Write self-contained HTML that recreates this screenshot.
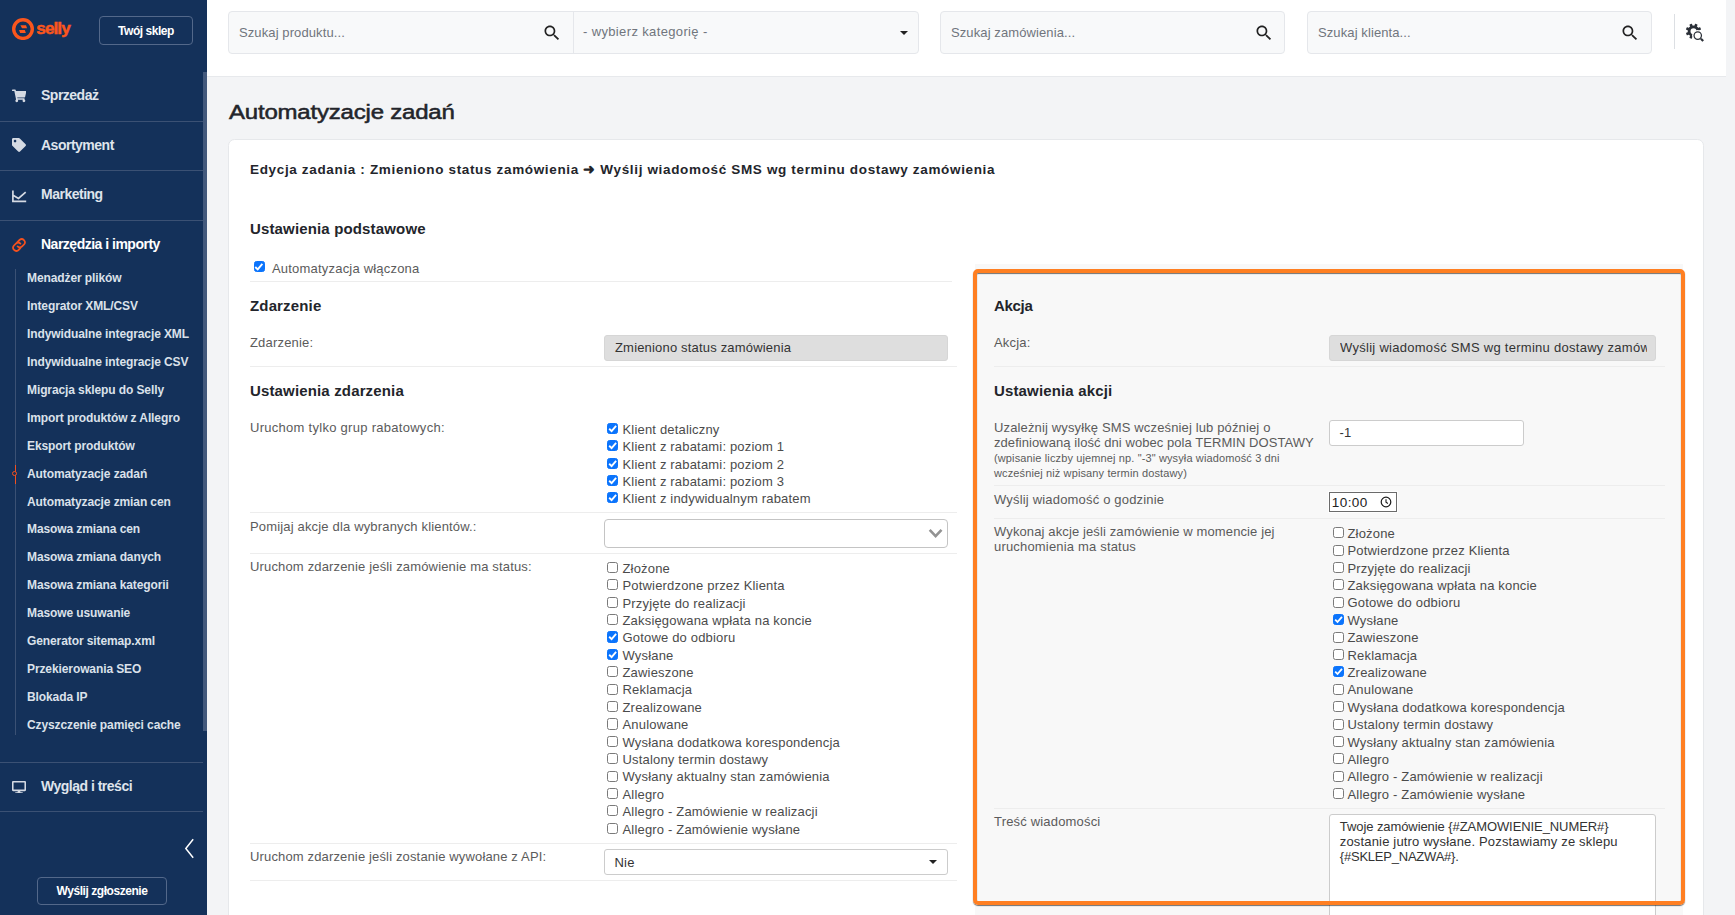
<!DOCTYPE html>
<html lang="pl">
<head>
<meta charset="utf-8">
<title>Automatyzacje zadań</title>
<style>
*{box-sizing:border-box;}
html,body{margin:0;padding:0;}
body{width:1735px;height:915px;overflow:hidden;position:relative;background:#f3f4f6;font-family:"Liberation Sans",sans-serif;font-size:13px;color:#555;letter-spacing:.18px;}
.abs{position:absolute;}
/* ---------- sidebar ---------- */
#side{position:absolute;left:0;top:0;width:207px;height:915px;background:#14315a;color:#fff;}
#side .sb{position:absolute;left:203px;top:72px;width:4px;height:659px;background:#43597c;}
#logo{position:absolute;left:11.7px;top:17.8px;}
#logotxt{position:absolute;left:36.3px;top:16.6px;font-size:17.2px;font-weight:700;color:#fb561d;letter-spacing:-.95px;line-height:22px;-webkit-text-stroke:.5px #fb561d;}
.btn-o{position:absolute;border:1px solid #53688a;border-radius:4px;color:#fff;font-weight:700;font-size:12px;letter-spacing:-.45px;text-align:center;}
.mi{position:absolute;left:0;width:203px;height:50px;border-bottom:1px solid #3b5174;}
.mi span{position:absolute;left:41px;top:15px;font-size:14px;line-height:17px;font-weight:700;letter-spacing:-.5px;color:#dfe4ec;white-space:nowrap;}
.mi svg{position:absolute;}
.sub{position:absolute;left:27px;font-size:12px;line-height:14px;font-weight:700;letter-spacing:-.1px;color:#dbe1ea;white-space:nowrap;}
#vline{position:absolute;left:15px;top:269px;width:1px;height:466px;background:#3b5174;}
/* ---------- topbar ---------- */
#top{position:absolute;left:207px;top:0;width:1519px;height:77px;background:#fff;border-bottom:1px solid #e7e9ec;}
.sbox{position:absolute;top:11px;height:43px;background:#f8f9fa;border:1px solid #e5e7eb;border-radius:4px;}
.ph{position:absolute;top:13px;font-size:13px;line-height:16px;color:#70757d;white-space:nowrap;letter-spacing:.1px;}
.sic{position:absolute;top:13px;}
/* ---------- content ---------- */
h1{position:absolute;left:229px;top:96.5px;margin:0;font-size:24px;line-height:28px;font-weight:400;color:#23252b;letter-spacing:-.2px;white-space:nowrap;-webkit-text-stroke:.6px #23252b;transform:scaleY(.88);transform-origin:0 22px;}
#card{position:absolute;left:227.5px;top:138.5px;width:1476px;height:800px;background:#fff;border-radius:6.5px;border:1px solid #e6e8eb;}
.h2{position:absolute;font-size:15px;line-height:20px;font-weight:700;color:#23252b;letter-spacing:.15px;white-space:nowrap;}
.lbl{position:absolute;font-size:13px;line-height:15px;white-space:nowrap;color:#5b5b5b;}
.hr{position:absolute;height:1px;background:#ededed;}
.dis{position:absolute;height:26px;background:#dedede;border:1px solid #d6d6d6;border-radius:3px;color:#333;font-size:13px;line-height:24px;padding-left:10px;white-space:nowrap;overflow:hidden;}
.cb{position:absolute;width:11.5px;height:11.5px;border:1.1px solid #7a7a7a;border-radius:2.5px;background:#fff;}
.cb.on{background:#0b74fc;border-color:#0b74fc;}
.cb svg{position:absolute;left:-1.1px;top:-1.1px;width:calc(100% + 2.2px);height:calc(100% + 2.2px);}
.cl{position:absolute;font-size:13px;line-height:15px;color:#4b4b4b;white-space:nowrap;}
</style>
</head>
<body>
<!-- SIDEBAR -->
<div id="side">
  <svg id="logo" width="22" height="22" viewBox="0 0 22 22"><circle cx="11" cy="11.1" r="9.3" fill="none" stroke="#fb561d" stroke-width="3.4"/><path d="M8.400 7.300h5.650l1 2.900h-5.050zM7 11.950h5.840l1 3h-5.640z" fill="#fb561d"/></svg>
  <div id="logotxt">selly</div>
  <div class="btn-o" style="left:99px;top:16px;width:94px;height:29px;line-height:28px;">Twój sklep</div>
  <div class="sb"></div>
  <div class="mi" style="top:72px"><svg style="left:12px;top:17px" width="14.300" height="13.600" viewBox="0 0 576 512"><path fill="#d5dae3" d="M528.12 301.319l47.273-208C578.806 78.301 567.391 64 551.99 64H159.208l-9.166-44.81C147.758 8.021 137.93 0 126.529 0H24C10.745 0 0 10.745 0 24v16c0 13.255 10.745 24 24 24h69.883l70.248 343.435C147.325 417.1 136 435.222 136 456c0 30.928 25.072 56 56 56s56-25.072 56-56c0-15.674-6.447-29.835-16.824-40h209.647C430.447 426.165 424 440.326 424 456c0 30.928 25.072 56 56 56s56-25.072 56-56c0-22.172-12.888-41.332-31.579-50.405l5.517-24.276c3.413-15.018-8.002-29.319-23.403-29.319H218.117l-6.545-32h293.145c11.206 0 20.92-7.754 23.403-18.681z"/></svg><span>Sprzedaż</span></div>
  <div class="mi" style="top:121px;height:50px"><svg style="left:12px;top:17px" width="14" height="14" viewBox="0 0 512 512"><path fill="#d5dae3" d="M0 252.118V48C0 21.49 21.49 0 48 0h204.118a48 48 0 0 1 33.941 14.059l211.882 211.882c18.745 18.745 18.745 49.137 0 67.882L293.823 497.941c-18.745 18.745-49.137 18.745-67.882 0L14.059 286.059A48 48 0 0 1 0 252.118zM112 64c-26.51 0-48 21.49-48 48s21.49 48 48 48 48-21.49 48-48-21.49-48-48-48z"/></svg><span style="top:16px">Asortyment</span></div>
  <div class="mi" style="top:171px;height:50px"><svg style="left:12px;top:17px" width="14.500" height="14.500" viewBox="0 0 14.500 14.500"><path fill="none" stroke="#d5dae3" stroke-width="1.700" d="M.9 2.600v10.700h13.300M1.500 7.400l5 3 7.200-6.300"/></svg><span style="top:15px">Marketing</span></div>
  <div class="mi" style="top:221px;height:48px;border-bottom:0"><svg style="left:10.900px;top:16px" width="16" height="16" viewBox="0 0 15 15"><g fill="none" stroke="#f4511e" stroke-width="1.650" stroke-linecap="round"><path d="M6.200 4.600l2-2a3 3 0 0 1 4.200 4.200l-2 2a3 3 0 0 1-4.200 0"/><path d="M8.800 10.400l-2 2a3 3 0 0 1-4.200-4.200l2-2a3 3 0 0 1 4.200 0"/></g></svg><span style="top:15px;color:#fff">Narzędzia i importy</span></div>
  <div id="vline"></div>
  <div class="sub" style="top:271px">Menadżer plików</div>
  <div class="sub" style="top:299px">Integrator XML/CSV</div>
  <div class="sub" style="top:327px">Indywidualne integracje XML</div>
  <div class="sub" style="top:355px">Indywidualne integracje CSV</div>
  <div class="sub" style="top:383px">Migracja sklepu do Selly</div>
  <div class="sub" style="top:411px">Import produktów z Allegro</div>
  <div class="sub" style="top:439px">Eksport produktów</div>
  <div class="sub" style="top:467px">Automatyzacje zadań</div>
  <div class="sub" style="top:495px">Automatyzacje zmian cen</div>
  <div class="sub" style="top:522px">Masowa zmiana cen</div>
  <div class="sub" style="top:550px">Masowa zmiana danych</div>
  <div class="sub" style="top:578px">Masowa zmiana kategorii</div>
  <div class="sub" style="top:606px">Masowe usuwanie</div>
  <div class="sub" style="top:634px">Generator sitemap.xml</div>
  <div class="sub" style="top:662px">Przekierowania SEO</div>
  <div class="sub" style="top:690px">Blokada IP</div>
  <div class="sub" style="top:718px">Czyszczenie pamięci cache</div>
  <div class="abs" style="left:15px;top:465px;width:1px;height:19px;background:#f4511e"></div><div class="abs" style="left:11.800px;top:470.700px;width:5.400px;height:5.400px;border:1.200px solid #f4511e;border-radius:50%;background:#14315a"></div>
  <div class="mi" style="top:762px;height:50px;border-top:1px solid #3b5174"><svg style="left:12px;top:17.500px" width="14" height="12.500" viewBox="0 0 576 512"><path fill="#d5dae3" d="M528 0H48C21.5 0 0 21.5 0 48v320c0 26.5 21.5 48 48 48h192l-16 48h-72c-13.3 0-24 10.7-24 24s10.7 24 24 24h272c13.3 0 24-10.7 24-24s-10.7-24-24-24h-72l-16-48h192c26.5 0 48-21.5 48-48V48c0-26.5-21.5-48-48-48zm-16 352H64V64h448v288z"/></svg><span style="top:15.300px">Wygląd i treści</span></div>
  <svg class="abs" style="left:184px;top:838px" width="11" height="21" viewBox="0 0 11 21"><path d="M9.2 1.2L1.8 10.5l7.4 9.3" fill="none" stroke="#fff" stroke-width="1.5"/></svg>
  <div class="btn-o" style="left:37px;top:876.500px;width:130px;height:28.500px;line-height:27.500px;">Wyślij zgłoszenie</div>
</div>
<!-- TOPBAR -->
<div id="top">
  <div class="sbox" style="left:21px;width:691px;">
    <div class="ph" style="left:10px;">Szukaj produktu...</div>
    <svg class="abs" style="left:313px;top:11px" width="20" height="20" viewBox="0 0 24 24"><path fill="#222" d="M15.5 14h-.79l-.28-.27C15.41 12.59 16 11.11 16 9.5 16 5.91 13.09 3 9.500 3S3 5.910 3 9.500 5.910 16 9.500 16c1.610 0 3.090-.590 4.230-1.570l.270.280v.790l5 4.990L20.490 19l-4.990-5zm-6 0C7.010 14 5 11.990 5 9.500S7.010 5 9.500 5 14 7.010 14 9.500 11.990 14 9.500 14z"/></svg>
    <div class="abs" style="left:344px;top:0;width:1px;height:41px;background:#e5e7eb"></div>
    <div class="ph" style="left:354px;top:12px;letter-spacing:.36px">- wybierz kategorię -</div>
    <div class="abs" style="left:671px;top:18.500px;width:0;height:0;border:4.800px solid transparent;border-top:4.800px solid #222;border-bottom:0"></div>
  </div>
  <div class="sbox" style="left:733px;width:345px;">
    <div class="ph" style="left:10px;">Szukaj zamówienia...</div>
    <svg class="abs" style="left:313px;top:11px" width="20" height="20" viewBox="0 0 24 24"><path fill="#222" d="M15.5 14h-.79l-.28-.27C15.41 12.59 16 11.11 16 9.5 16 5.91 13.09 3 9.500 3S3 5.910 3 9.500 5.910 16 9.500 16c1.610 0 3.090-.590 4.230-1.570l.270.280v.790l5 4.990L20.490 19l-4.990-5zm-6 0C7.010 14 5 11.990 5 9.500S7.010 5 9.500 5 14 7.010 14 9.500 11.990 14 9.500 14z"/></svg>
  </div>
  <div class="sbox" style="left:1100px;width:345px;">
    <div class="ph" style="left:10px;">Szukaj klienta...</div>
    <svg class="abs" style="left:312px;top:11px" width="20" height="20" viewBox="0 0 24 24"><path fill="#222" d="M15.5 14h-.79l-.28-.27C15.41 12.59 16 11.11 16 9.5 16 5.91 13.09 3 9.500 3S3 5.910 3 9.500 5.910 16 9.500 16c1.610 0 3.090-.590 4.230-1.570l.270.280v.790l5 4.990L20.490 19l-4.990-5zm-6 0C7.010 14 5 11.990 5 9.500S7.010 5 9.500 5 14 7.010 14 9.500 11.990 14 9.500 14z"/></svg>
  </div>
  <div class="abs" style="left:1467px;top:14px;width:1px;height:35px;background:#dcdfe3"></div>
  <svg class="abs" style="left:1477px;top:22px" width="22" height="22" viewBox="0 0 22 22">
    <g fill="#2b3038"><rect x="8.15" y="1.5" width="2.7" height="3.6" rx=".5" transform="rotate(22.5 9.5 9.2)"/><rect x="8.15" y="1.5" width="2.7" height="3.6" rx=".5" transform="rotate(67.5 9.5 9.2)"/><rect x="8.15" y="1.5" width="2.7" height="3.6" rx=".5" transform="rotate(112.5 9.5 9.2)"/><rect x="8.15" y="1.5" width="2.7" height="3.6" rx=".5" transform="rotate(157.5 9.5 9.2)"/><rect x="8.15" y="1.5" width="2.7" height="3.6" rx=".5" transform="rotate(202.5 9.5 9.2)"/><rect x="8.15" y="1.5" width="2.7" height="3.6" rx=".5" transform="rotate(247.5 9.5 9.2)"/><rect x="8.15" y="1.5" width="2.7" height="3.6" rx=".5" transform="rotate(292.5 9.5 9.2)"/><rect x="8.15" y="1.5" width="2.7" height="3.6" rx=".5" transform="rotate(337.5 9.5 9.2)"/></g><circle cx="9.500" cy="9.200" r="4.400" fill="none" stroke="#2b3038" stroke-width="2.800"/>
    <circle cx="13.750" cy="13.600" r="5.700" fill="#fff"/>
    <circle cx="13.750" cy="13.600" r="3.700" fill="none" stroke="#2b3038" stroke-width="1.250"/>
    <path d="M16.900 16.700l2.300 2.300" stroke="#2b3038" stroke-width="2.200" stroke-linecap="butt"/>
  </svg>
</div>
<!-- CONTENT -->
<h1>Automatyzacje zadań</h1>
<div id="card"></div>
<div class="abs" style="left:975px;top:264px;width:708px;height:660px;background:#f8f8f8"></div>
<div class="h2" style="left:250px;top:160.0px;font-size:13.5px;letter-spacing:.655px">Edycja zadania : Zmieniono status zamówienia ➜ Wyślij wiadomość SMS wg terminu dostawy zamówienia</div>
<div class="h2" style="left:250px;top:218.5px;font-size:15px;">Ustawienia podstawowe</div>
<div class="cb on" style="left:253.5px;top:260.700px"><svg viewBox="0 0 12 12"><path d="M2.300 6.100l2.550 2.450 4.750-5.500" stroke="#fff" stroke-width="1.950" fill="none" stroke-linejoin="miter"/></svg></div>
<div class="lbl" style="left:272px;top:261px;letter-spacing:.2px">Automatyzacja włączona</div>
<div class="hr" style="left:250px;top:281px;width:702px"></div>
<div class="h2" style="left:250px;top:296.0px;font-size:15px;">Zdarzenie</div>
<div class="lbl" style="left:250px;top:335px;">Zdarzenie:</div>
<div class="dis" style="left:604px;top:335px;width:344px">Zmieniono status zamówienia</div>
<div class="hr" style="left:250px;top:366px;width:707px"></div>
<div class="h2" style="left:250px;top:380.7px;font-size:15px;">Ustawienia zdarzenia</div>
<div class="lbl" style="left:250px;top:420px;letter-spacing:.28px">Uruchom tylko grup rabatowych:</div>
<div class="cb on" style="left:607px;top:423.0px;width:11.2px;height:11.2px"><svg viewBox="0 0 12 12"><path d="M2.300 6.100l2.550 2.450 4.750-5.500" stroke="#fff" stroke-width="1.950" fill="none" stroke-linejoin="miter"/></svg></div><div class="cl" style="left:622.5px;top:422px">Klient detaliczny</div>
<div class="cb on" style="left:607px;top:440.3px;width:11.2px;height:11.2px"><svg viewBox="0 0 12 12"><path d="M2.300 6.100l2.550 2.450 4.750-5.500" stroke="#fff" stroke-width="1.950" fill="none" stroke-linejoin="miter"/></svg></div><div class="cl" style="left:622.5px;top:439px">Klient z rabatami: poziom 1</div>
<div class="cb on" style="left:607px;top:457.6px;width:11.2px;height:11.2px"><svg viewBox="0 0 12 12"><path d="M2.300 6.100l2.550 2.450 4.750-5.500" stroke="#fff" stroke-width="1.950" fill="none" stroke-linejoin="miter"/></svg></div><div class="cl" style="left:622.5px;top:457px">Klient z rabatami: poziom 2</div>
<div class="cb on" style="left:607px;top:475.0px;width:11.2px;height:11.2px"><svg viewBox="0 0 12 12"><path d="M2.300 6.100l2.550 2.450 4.750-5.500" stroke="#fff" stroke-width="1.950" fill="none" stroke-linejoin="miter"/></svg></div><div class="cl" style="left:622.5px;top:474px">Klient z rabatami: poziom 3</div>
<div class="cb on" style="left:607px;top:492.3px;width:11.2px;height:11.2px"><svg viewBox="0 0 12 12"><path d="M2.300 6.100l2.550 2.450 4.750-5.500" stroke="#fff" stroke-width="1.950" fill="none" stroke-linejoin="miter"/></svg></div><div class="cl" style="left:622.5px;top:491px">Klient z indywidualnym rabatem</div>
<div class="hr" style="left:250px;top:512px;width:707px"></div>
<div class="lbl" style="left:250px;top:519px;letter-spacing:.165px">Pomijaj akcje dla wybranych klientów.:</div>
<div class="abs" style="left:604px;top:519px;width:344px;height:29px;background:#fff;border:1px solid #c4c4c4;border-radius:4px"></div>
<svg class="abs" style="left:928px;top:527px" width="16" height="12" viewBox="0 0 16 12"><path d="M1.700 2.800l5.900 6.300 5.900-6.300" fill="none" stroke="#939393" stroke-width="2.600"/></svg>
<div class="hr" style="left:250px;top:553px;width:707px"></div>
<div class="lbl" style="left:250px;top:559px;letter-spacing:.16px">Uruchom zdarzenie jeśli zamówienie ma status:</div>
<div class="cb" style="left:607px;top:561.8px;width:11.2px;height:11.2px"></div><div class="cl" style="left:622.5px;top:561px">Złożone</div>
<div class="cb" style="left:607px;top:579.2px;width:11.2px;height:11.2px"></div><div class="cl" style="left:622.5px;top:578px">Potwierdzone przez Klienta</div>
<div class="cb" style="left:607px;top:596.6px;width:11.2px;height:11.2px"></div><div class="cl" style="left:622.5px;top:596px">Przyjęte do realizacji</div>
<div class="cb" style="left:607px;top:614.0px;width:11.2px;height:11.2px"></div><div class="cl" style="left:622.5px;top:613px">Zaksięgowana wpłata na koncie</div>
<div class="cb on" style="left:607px;top:631.4px;width:11.2px;height:11.2px"><svg viewBox="0 0 12 12"><path d="M2.300 6.100l2.550 2.450 4.750-5.500" stroke="#fff" stroke-width="1.950" fill="none" stroke-linejoin="miter"/></svg></div><div class="cl" style="left:622.5px;top:630px">Gotowe do odbioru</div>
<div class="cb on" style="left:607px;top:648.8px;width:11.2px;height:11.2px"><svg viewBox="0 0 12 12"><path d="M2.300 6.100l2.550 2.450 4.750-5.500" stroke="#fff" stroke-width="1.950" fill="none" stroke-linejoin="miter"/></svg></div><div class="cl" style="left:622.5px;top:648px">Wysłane</div>
<div class="cb" style="left:607px;top:666.2px;width:11.2px;height:11.2px"></div><div class="cl" style="left:622.5px;top:665px">Zawieszone</div>
<div class="cb" style="left:607px;top:683.6px;width:11.2px;height:11.2px"></div><div class="cl" style="left:622.5px;top:682px">Reklamacja</div>
<div class="cb" style="left:607px;top:701.0px;width:11.2px;height:11.2px"></div><div class="cl" style="left:622.5px;top:700px">Zrealizowane</div>
<div class="cb" style="left:607px;top:718.4px;width:11.2px;height:11.2px"></div><div class="cl" style="left:622.5px;top:717px">Anulowane</div>
<div class="cb" style="left:607px;top:735.7px;width:11.2px;height:11.2px"></div><div class="cl" style="left:622.5px;top:735px">Wysłana dodatkowa korespondencja</div>
<div class="cb" style="left:607px;top:753.1px;width:11.2px;height:11.2px"></div><div class="cl" style="left:622.5px;top:752px">Ustalony termin dostawy</div>
<div class="cb" style="left:607px;top:770.5px;width:11.2px;height:11.2px"></div><div class="cl" style="left:622.5px;top:769px">Wysłany aktualny stan zamówienia</div>
<div class="cb" style="left:607px;top:787.9px;width:11.2px;height:11.2px"></div><div class="cl" style="left:622.5px;top:787px">Allegro</div>
<div class="cb" style="left:607px;top:805.3px;width:11.2px;height:11.2px"></div><div class="cl" style="left:622.5px;top:804px">Allegro - Zamówienie w realizacji</div>
<div class="cb" style="left:607px;top:822.7px;width:11.2px;height:11.2px"></div><div class="cl" style="left:622.5px;top:822px">Allegro - Zamówienie wysłane</div>
<div class="hr" style="left:250px;top:843px;width:707px"></div>
<div class="lbl" style="left:250px;top:849px;letter-spacing:.15px">Uruchom zdarzenie jeśli zostanie wywołane z API:</div>
<div class="abs" style="left:604px;top:849px;width:344px;height:25.800px;background:#fff;border:1px solid #ccc;border-radius:3px;color:#333;font-size:13px;line-height:25px;padding-left:9.500px">Nie</div>
<div class="abs" style="left:929px;top:860px;width:0;height:0;border:4.400px solid transparent;border-top:4.800px solid #222;border-bottom:0"></div>
<div class="hr" style="left:250px;top:880px;width:707px"></div>
<div class="h2" style="left:994px;top:296.0px;font-size:15px;letter-spacing:-.3px">Akcja</div>
<div class="lbl" style="left:994px;top:335px;">Akcja:</div>
<div class="dis" style="left:1329px;top:335.4px;width:327px;padding:0"><div style="margin-left:10px;width:306.5px;overflow:hidden;white-space:nowrap;letter-spacing:.28px">Wyślij wiadomość SMS wg terminu dostawy zamówienia</div></div>
<div class="hr" style="left:994px;top:366px;width:671px"></div>
<div class="h2" style="left:994px;top:380.8px;font-size:15px;">Ustawienia akcji</div>
<div class="lbl" style="left:994px;top:420px;letter-spacing:.14px">Uzależnij wysyłkę SMS wcześniej lub później o</div>
<div class="lbl" style="left:994px;top:435px;letter-spacing:.06px">zdefiniowaną ilość dni wobec pola TERMIN DOSTAWY</div>
<div class="lbl" style="left:994px;top:451px;font-size:11px;letter-spacing:.125px;line-height:14px">(wpisanie liczby ujemnej np. "-3" wysyła wiadomość 3 dni</div>
<div class="lbl" style="left:994px;top:466px;font-size:11px;letter-spacing:.125px;line-height:14px">wcześniej niż wpisany termin dostawy)</div>
<div class="abs" style="left:1329px;top:420.300px;width:195px;height:25.300px;background:#fff;border:1px solid #ccc;border-radius:3px;color:#333;font-size:13px;line-height:24px;padding-left:9.500px">-1</div>
<div class="hr" style="left:994px;top:485px;width:671px"></div>
<div class="lbl" style="left:994px;top:492px;">Wyślij wiadomość o godzinie</div>
<div class="abs" style="left:1329px;top:492px;width:68px;height:20px;background:#fff;border:1px solid #6b6b6b;color:#222;font-size:13.500px;line-height:20px;padding-left:1.800px;letter-spacing:.42px;box-shadow:0 0 0 1px rgba(255,255,255,.8)">10:00</div>
<svg class="abs" style="left:1379.900px;top:496px" width="12" height="12" viewBox="0 0 12 12"><circle cx="6" cy="6" r="4.800" fill="none" stroke="#1a1a1a" stroke-width="1.200"/><path d="M6 3.300V6.200l1.900 1.300" fill="none" stroke="#1a1a1a" stroke-width="1.100"/></svg>
<div class="hr" style="left:994px;top:518px;width:671px"></div>
<div class="lbl" style="left:994px;top:524px;letter-spacing:.12px">Wykonaj akcje jeśli zamówienie w momencie jej</div>
<div class="lbl" style="left:994px;top:539px;">uruchomienia ma status</div>
<div class="cb" style="left:1333px;top:527.2px;width:11px;height:11px"></div><div class="cl" style="left:1347.5px;top:526px">Złożone</div>
<div class="cb" style="left:1333px;top:544.6px;width:11px;height:11px"></div><div class="cl" style="left:1347.5px;top:543px">Potwierdzone przez Klienta</div>
<div class="cb" style="left:1333px;top:562.0px;width:11px;height:11px"></div><div class="cl" style="left:1347.5px;top:561px">Przyjęte do realizacji</div>
<div class="cb" style="left:1333px;top:579.4px;width:11px;height:11px"></div><div class="cl" style="left:1347.5px;top:578px">Zaksięgowana wpłata na koncie</div>
<div class="cb" style="left:1333px;top:596.8px;width:11px;height:11px"></div><div class="cl" style="left:1347.5px;top:595px">Gotowe do odbioru</div>
<div class="cb on" style="left:1333px;top:614.1px;width:11px;height:11px"><svg viewBox="0 0 12 12"><path d="M2.300 6.100l2.550 2.450 4.750-5.500" stroke="#fff" stroke-width="1.950" fill="none" stroke-linejoin="miter"/></svg></div><div class="cl" style="left:1347.5px;top:613px">Wysłane</div>
<div class="cb" style="left:1333px;top:631.5px;width:11px;height:11px"></div><div class="cl" style="left:1347.5px;top:630px">Zawieszone</div>
<div class="cb" style="left:1333px;top:648.9px;width:11px;height:11px"></div><div class="cl" style="left:1347.5px;top:648px">Reklamacja</div>
<div class="cb on" style="left:1333px;top:666.3px;width:11px;height:11px"><svg viewBox="0 0 12 12"><path d="M2.300 6.100l2.550 2.450 4.750-5.500" stroke="#fff" stroke-width="1.950" fill="none" stroke-linejoin="miter"/></svg></div><div class="cl" style="left:1347.5px;top:665px">Zrealizowane</div>
<div class="cb" style="left:1333px;top:683.7px;width:11px;height:11px"></div><div class="cl" style="left:1347.5px;top:682px">Anulowane</div>
<div class="cb" style="left:1333px;top:701.1px;width:11px;height:11px"></div><div class="cl" style="left:1347.5px;top:700px">Wysłana dodatkowa korespondencja</div>
<div class="cb" style="left:1333px;top:718.5px;width:11px;height:11px"></div><div class="cl" style="left:1347.5px;top:717px">Ustalony termin dostawy</div>
<div class="cb" style="left:1333px;top:735.9px;width:11px;height:11px"></div><div class="cl" style="left:1347.5px;top:735px">Wysłany aktualny stan zamówienia</div>
<div class="cb" style="left:1333px;top:753.3px;width:11px;height:11px"></div><div class="cl" style="left:1347.5px;top:752px">Allegro</div>
<div class="cb" style="left:1333px;top:770.7px;width:11px;height:11px"></div><div class="cl" style="left:1347.5px;top:769px">Allegro - Zamówienie w realizacji</div>
<div class="cb" style="left:1333px;top:788.0px;width:11px;height:11px"></div><div class="cl" style="left:1347.5px;top:787px">Allegro - Zamówienie wysłane</div>
<div class="hr" style="left:994px;top:808px;width:671px"></div>
<div class="lbl" style="left:994px;top:814px;">Treść wiadomości</div>
<div class="abs" style="left:1329px;top:814.300px;width:327px;height:120px;background:#fff;border:1px solid #ccc;border-radius:3px;color:#333;font-size:13px;line-height:15px;padding:3.500px 0 0 9.800px;white-space:nowrap;letter-spacing:.12px"><span style="letter-spacing:-.08px">Twoje zamówienie {#ZAMOWIENIE_NUMER#}</span><br><span style="letter-spacing:.17px">zostanie jutro wysłane. Pozstawiamy ze sklepu</span><br><span style="letter-spacing:-.22px">{#SKLEP_NAZWA#}.</span></div>
<div class="abs" style="left:973px;top:269px;width:712px;height:636px;border:4px solid #ff7f22;border-radius:5px;box-shadow:0 1px 1px rgba(0,0,0,.55),inset 0 1px 1px rgba(0,0,0,.55)"></div>
</body>
</html>
